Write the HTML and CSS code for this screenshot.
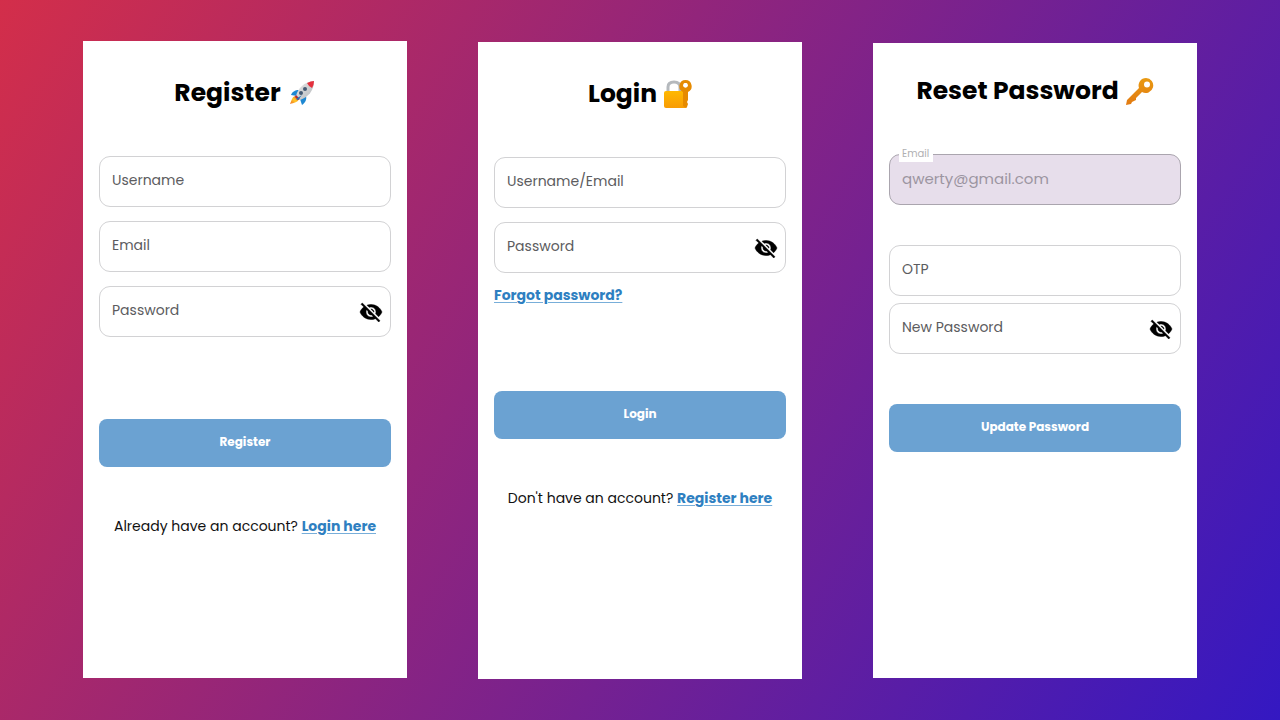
FILE: index.html
```html
<!DOCTYPE html>
<html lang="en">
<head>
<meta charset="utf-8">
<meta name="viewport" content="width=device-width, initial-scale=1">
<title>Account screens</title>
<link rel="stylesheet" href="styles.css">
</head>
<body>
<svg class="defs" aria-hidden="true">
  <defs>
    <symbol id="eye-off" viewBox="0 0 24 24"><path d="M12 7c2.760 0 5 2.240 5 5 0 .65-.13 1.260-.36 1.830l2.920 2.920c1.510-1.260 2.700-2.890 3.430-4.750-1.730-4.390-6-7.500-11-7.500-1.400 0-2.740.25-3.980.7l2.160 2.160C10.740 7.130 11.350 7 12 7zM2 4.270l2.280 2.280.46.46C3.080 8.300 1.780 10.020 1 12c1.730 4.390 6 7.500 11 7.500 1.550 0 3.030-.3 4.380-.84l.42.42L19.730 22 21 20.730 3.270 3 2 4.270zM7.530 9.800l1.550 1.550c-.05.21-.08.43-.08.65 0 1.660 1.340 3 3 3 .22 0 .44-.03.65-.08l1.550 1.550c-.67.33-1.410.53-2.200.53-2.760 0-5-2.240-5-5 0-.79.2-1.530.53-2.200zm4.310-.78 3.150 3.150.02-.16c0-1.660-1.340-3-3-3l-.17.01z" stroke="#000" stroke-width=".5"/></symbol>
    <linearGradient id="gold" x1="0" y1="0" x2="0" y2="1"><stop offset="0" stop-color="#ffb800"/><stop offset="1" stop-color="#f89c05"/></linearGradient>
    <linearGradient id="amber" x1="0" y1="0" x2="0" y2="1"><stop offset="0" stop-color="#e99a12"/><stop offset="1" stop-color="#e27a12"/></linearGradient>
    <linearGradient id="flame" x1="1" y1="0" x2="0" y2="1"><stop offset="0" stop-color="#e9402c"/><stop offset=".5" stop-color="#ffca28"/><stop offset="1" stop-color="#f36b20"/></linearGradient>
    <linearGradient id="hull" x1="0" y1="0" x2="1" y2="1"><stop offset="0" stop-color="#e9e9e9"/><stop offset="1" stop-color="#b5b8bb"/></linearGradient>
  </defs>
</svg>
<main class="screens">
  <form class="card">
    <h1 class="title">Register
      <svg class="emoji" viewBox="0 0 28 28" aria-hidden="true">
        <path fill="url(#flame)" d="M8 17C4 17 4 21 2 25c4-1 8-2 9-5z"/>
        <path fill="#1e88d2" d="M11 11c-4 0-7 2-8 5l6 1zM18 17c1 4-1 7-4 9l-2-6z"/>
        <path fill="url(#hull)" d="M8 17C10 9 16 3 26 2c0 10-6 16-14 19z"/>
        <path fill="#e5303d" d="M19 4q4-2 7-2 0 4-2 7-3-1-5-5z"/>
        <path fill="#b02a39" d="m8 16 4 4-2 1-3-3z"/>
        <circle cx="17" cy="10" r="2" fill="#455a73"/>
        <circle cx="13" cy="14" r="2" fill="#455a73"/>
        <path fill="#1976bd" d="m8 20 6-4-4 5z"/>
      </svg>
    </h1>
    <div class="fields">
      <input class="input" type="text" placeholder="Username" aria-label="Username">
      <input class="input" type="email" placeholder="Email" aria-label="Email">
      <div class="field">
        <input class="input" type="password" placeholder="Password" aria-label="Password">
        <button class="toggle" type="button" aria-label="Show password"><svg class="eye"><use href="#eye-off"/></svg></button>
      </div>
    </div>
    <button class="submit submit-register" type="button">Register</button>
    <p class="switch">Already have an account? <a class="link" href="#login">Login here</a></p>
  </form>

  <form class="card card-login" id="login">
    <h1 class="title">Login
      <svg class="emoji" viewBox="0 0 28 28" aria-hidden="true">
        <path fill="none" stroke="#b5b9bd" stroke-width="3" d="M4 13V7q0-5 6-5t6 5v6"/>
        <rect x="0" y="11" width="23" height="17" rx="2" fill="url(#gold)"/>
        <path fill="#e68a00" fill-rule="evenodd" d="M21.500 0a6.300 6.300 0 0 1 2.500 12v8l-1 2 1 2-1 3-1 1-3-2V12A6.300 6.300 0 0 1 21.500 0zm0 3a2.200 2.200 0 1 0 0 4.400 2.200 2.200 0 0 0 0-4.400z"/>
        <circle cx="21.500" cy="5.200" r="2.200" fill="#fff"/>
      </svg>
    </h1>
    <div class="fields">
      <input class="input" type="text" placeholder="Username/Email" aria-label="Username or email">
      <div class="field">
        <input class="input" type="password" placeholder="Password" aria-label="Password">
        <button class="toggle" type="button" aria-label="Show password"><svg class="eye"><use href="#eye-off"/></svg></button>
      </div>
    </div>
    <a class="link forgot" href="#reset">Forgot password?</a>
    <button class="submit submit-login" type="button">Login</button>
    <p class="switch">Don't have an account? <a class="link" href="#register">Register here</a></p>
  </form>

  <form class="card card-reset" id="reset">
    <h1 class="title">Reset Password
      <svg class="emoji" viewBox="0 0 28 28" aria-hidden="true">
        <path fill="url(#amber)" fill-rule="evenodd" d="M20 1a7.500 7.500 0 1 1-4 14l-6 6v2l-2 1-2 1-1 2-5 1 1-5L13 11A7.500 7.500 0 0 1 20 1zm1 3.500a3 3 0 1 0 0 6 3 3 0 0 0 0-6z"/>
      </svg>
    </h1>
    <div class="field">
      <label class="float-label" for="reset-email">Email</label>
      <input class="input input-locked" id="reset-email" type="email" value="qwerty@gmail.com" disabled>
    </div>
    <div class="fields fields-reset">
      <input class="input" type="text" placeholder="OTP" aria-label="OTP">
      <div class="field">
        <input class="input" type="password" placeholder="New Password" aria-label="New password">
        <button class="toggle" type="button" aria-label="Show password"><svg class="eye"><use href="#eye-off"/></svg></button>
      </div>
    </div>
    <button class="submit submit-reset" type="button">Update Password</button>
  </form>
</main>
</body>
</html>
```
FILE: styles.css
```css
* { box-sizing: border-box; }

body {
  margin: 0;
  min-height: 100vh;
  background: linear-gradient(122deg, #d32e4a, #3418c2);
  font-family: Poppins, Inter, "Open Sans", sans-serif;
  font-size: 14px;
  line-height: 20px;
  color: #111;
}

.defs { position: absolute; width: 0; height: 0; }

.screens {
  display: grid;
  grid-template-columns: repeat(3, 1fr);
  gap: 71px;
  min-height: 100vh;
  padding: 41px 83px;
}

.card {
  display: flex;
  flex-direction: column;
  margin-bottom: 1px;
  padding: 34px 16px 16px;
  background: #fff;
}

.card-login { margin: 1px 0 0; }
.card-reset { margin: 2px 0 1px; padding-top: 30px; }

.title {
  display: flex;
  align-items: center;
  justify-content: center;
  gap: 7px;
  margin: 0 0 45px;
  font-size: 25px;
  line-height: 36px;
  font-weight: 700;
  color: #000;
}

.emoji { width: 28px; height: 28px; }

.fields { display: grid; gap: 14px; }
.fields-reset { gap: 7px; margin-top: 40px; }

.field { position: relative; }

.input {
  display: block;
  width: 100%;
  height: 51px;
  padding: 0 12px 2px;
  border: 1px solid #d2d2d4;
  border-radius: 11px;
  background: #fff;
  font: inherit;
  color: #333;
}

.input::placeholder { color: #5c5c60; opacity: 1; }

.input-locked {
  border-color: #aaa5ae;
  background: #e7deeb;
  font-size: 15px;
  color: #9c95a1;
}

.float-label {
  position: absolute;
  top: -8px;
  left: 10px;
  padding: 0 4px 0 3px;
  background: #fff;
  font-size: 10px;
  line-height: 16px;
  color: #b0b0b2;
}

.toggle {
  position: absolute;
  top: 14px;
  right: 8px;
  padding: 0;
  border: 0;
  background: none;
}

.eye { display: block; width: 24px; height: 24px; }

.submit {
  height: 48px;
  padding: 0 0 3px;
  border: 0;
  border-radius: 8px;
  background: #6ba2d2;
  font: inherit;
  font-size: 12px;
  font-weight: 700;
  color: #fff;
}

.submit-register { margin-top: 82px; }
.submit-login { margin-top: 86px; }
.submit-reset { margin-top: 50px; }

.switch { margin: 49px 0 0; text-align: center; }

.link {
  font-weight: 700;
  color: #2e7fc1;
  text-decoration-color: #78aed9;
  text-underline-offset: 2px;
}

.forgot { align-self: flex-start; margin-top: 12px; }
```
